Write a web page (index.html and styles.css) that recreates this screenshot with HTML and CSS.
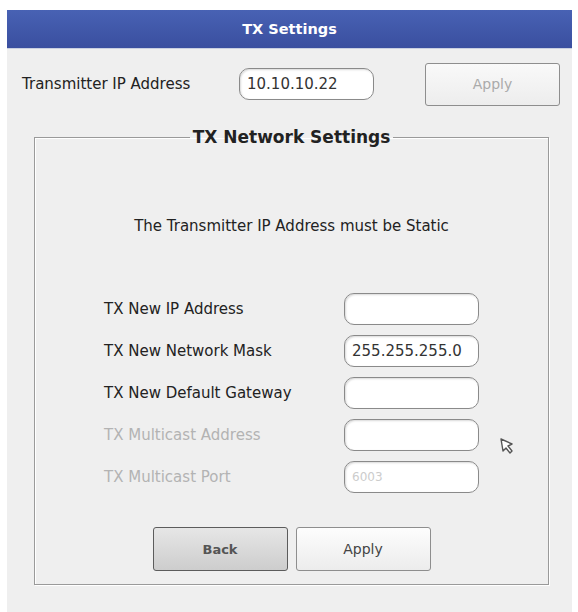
FILE: index.html
```html
<!DOCTYPE html>
<html lang="en">
<head>
<meta charset="UTF-8">
<meta name="viewport" content="width=device-width, initial-scale=1.0">
<title>TX Settings</title>
<link rel="stylesheet" href="styles.css">
</head>
<body>
<div class="window">
  <div class="titlebar">TX Settings</div>

  <div class="top-row">
    <label for="txIp">Transmitter IP Address</label>
    <input type="text" id="txIp" class="field" value="10.10.10.22">
    <button class="btn btn-disabled" disabled>Apply</button>
  </div>

  <fieldset class="net-box">
    <legend>TX Network Settings</legend>
    <p class="note">The Transmitter IP Address must be Static</p>

    <div class="rows">
      <label for="newIp">TX New IP Address</label>
      <input type="text" id="newIp" class="field">

      <label for="newMask">TX New Network Mask</label>
      <input type="text" id="newMask" class="field" value="255.255.255.0">

      <label for="newGw">TX New Default Gateway</label>
      <input type="text" id="newGw" class="field">

      <label for="mcAddr" class="off">TX Multicast Address</label>
      <input type="text" id="mcAddr" class="field">

      <label for="mcPort" class="off">TX Multicast Port</label>
      <input type="text" id="mcPort" class="field off" value="6003" disabled>
    </div>

    <div class="actions">
      <button class="btn btn-back">Back</button>
      <button class="btn">Apply</button>
    </div>
  </fieldset>

  <!-- mouse pointer -->
  <svg class="pointer" width="16" height="18" viewBox="0 0 16 18">
    <path d="M2 2 L13 7 L9 9 L13 14 L11 16 L7 11 L4 14 Z" fill="#fff" stroke="#555" stroke-width="1.4" stroke-linejoin="round"/>
  </svg>
</div>
</body>
</html>
```

FILE: styles.css
```css
/* TX settings panel */
body {
  margin: 0;
  background: #fff;
  font-family: "DejaVu Sans", Verdana, sans-serif;
  font-size: 15px;
  color: #222;
}
.window {
  position: relative;
  margin: 10px 6px 0 7px;
  height: 602px;
  background: #efefef;
}
.titlebar {
  height: 38px;
  line-height: 38px;
  text-align: center;
  color: #fff;
  font-weight: bold;
  font-size: 14.5px;
  background: linear-gradient(#4862b4, #3a4f9f);
  border-bottom: 1px solid #c9cfe0;
}
.top-row {
  display: flex;
  align-items: center;
  height: 70px;
  padding: 0 12px 0 15px;
}
.top-row label {
  width: 217px;
}
.top-row .field {
  width: 135px;
}
.top-row .btn {
  margin-left: auto;
  height: 43px;
}
.field {
  box-sizing: border-box;
  width: 135px;
  height: 32px;
  padding: 0 7px;
  border: 1px solid #8a8a8a;
  border-radius: 10px;
  background: #fff;
  box-shadow: inset 1px 1px 2px rgba(0, 0, 0, 0.15);
  font-family: inherit;
  font-size: 15px;
  color: #333;
}
.field.off {
  color: #ccc;
  font-size: 12px;
}
.btn {
  box-sizing: border-box;
  width: 135px;
  height: 44px;
  border: 1px solid #8e8e8e;
  border-radius: 3px;
  background: linear-gradient(#fdfdfd, #ececec);
  font-family: inherit;
  font-size: 14px;
  color: #444;
}
.btn-disabled {
  color: #aaa;
  background: linear-gradient(#f9f9f9, #ededed);
}
.btn-back {
  border-color: #5c5c5c;
  background: linear-gradient(#e6e6e6, #cdcdcd);
  color: #555;
  font-weight: bold;
  font-size: 13px;
}
.net-box {
  margin: 8px 0 0 27px;
  width: 515px;
  height: 458px;
  box-sizing: border-box;
  padding: 0;
  border: 1px solid #9a9a9a;
  box-shadow: inset 1px 1px 0 #fff, 1px 1px 0 #fff;
}
.net-box legend {
  margin: 0 auto;
  padding: 0 3px;
  line-height: 20px;
  font-weight: bold;
  font-size: 17px;
  color: #222;
}
.note {
  margin: 70px 0 0;
  line-height: 18px;
  text-align: center;
}
.rows {
  display: grid;
  grid-template-columns: 240px 135px;
  row-gap: 10px;
  align-items: center;
  margin: 58px 0 0 69px;
}
.rows label.off {
  color: #b3b3b3;
}
.actions {
  display: flex;
  justify-content: center;
  gap: 8px;
  margin-top: 34px;
}
.pointer {
  position: absolute;
  left: 492px;
  top: 427px;
}
```
